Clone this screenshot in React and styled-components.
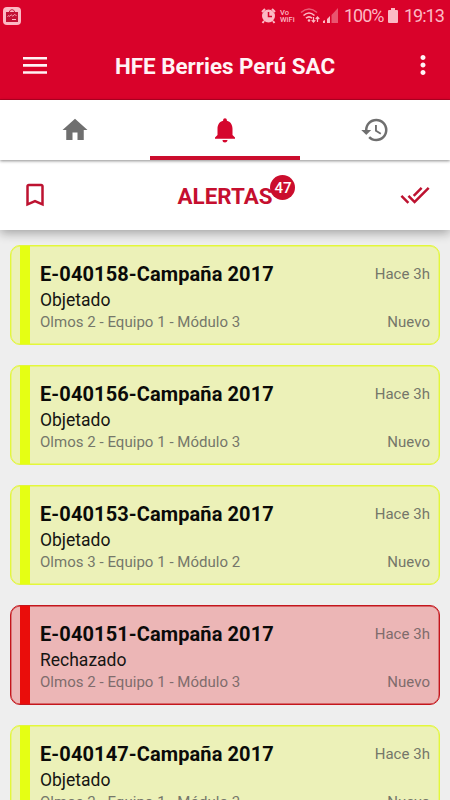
import styled, { createGlobalStyle } from "styled-components";
import {
  MdBookmarkBorder,
  MdDoneAll,
  MdHistory,
  MdHome,
  MdMoreVert,
  MdNotifications,
} from "react-icons/md";

const GlobalStyle = createGlobalStyle`
  * {
    box-sizing: border-box;
  }

  body {
    margin: 0;
    background: #eeeeee;
    font-family: Roboto, "Liberation Sans", sans-serif;
  }
`;

const tones = {
  yellow: { stripe: "#e5ff14", border: "#e3f73a", fill: "#ecf1b8", muted: "#75776a" },
  red: { stripe: "#ea0d0b", border: "#c4161c", fill: "#ecb6b6", muted: "#7f6c6c" },
};

const alerts = [
  { code: "E-040158", status: "Objetado", place: "Olmos 2 - Equipo 1 - Módulo 3", tone: "yellow" },
  { code: "E-040156", status: "Objetado", place: "Olmos 2 - Equipo 1 - Módulo 3", tone: "yellow" },
  { code: "E-040153", status: "Objetado", place: "Olmos 3 - Equipo 1 - Módulo 2", tone: "yellow" },
  { code: "E-040151", status: "Rechazado", place: "Olmos 2 - Equipo 1 - Módulo 3", tone: "red" },
  { code: "E-040147", status: "Objetado", place: "Olmos 2 - Equipo 1 - Módulo 3", tone: "yellow" },
];

const Screen = styled.div`
  display: flex;
  flex-direction: column;
  width: 450px;
  height: 800px;
  overflow: hidden;
`;

const StatusBar = styled.div`
  display: flex;
  flex: none;
  align-items: center;
  justify-content: space-between;
  height: 31px;
  padding: 0 8px 0 3px;
  background: #d9022a;
  color: #fcb9c4;
`;

const StatusIcons = styled.div`
  display: flex;
  align-items: center;
`;

const Vowifi = styled.div`
  width: 16px;
  margin: 0 4px;
  font-size: 7.5px;
  font-weight: 500;
  line-height: 7px;
`;

const StatusText = styled.span`
  width: 38px;
  margin: 1px 6px 0;
  font-size: 18px;
  line-height: 30px;
  letter-spacing: -1px;
  white-space: nowrap;

  &:last-child {
    margin-right: 0;
  }
`;

const Header = styled.header`
  display: flex;
  flex: none;
  align-items: center;
  justify-content: space-between;
  height: 69px;
  padding: 0 12.5px 0 20px;
  background: #d9022a;
  border-bottom: 1px solid #b60022;
  color: #fff3f5;
`;

const IconButton = styled.button`
  display: flex;
  align-items: center;
  justify-content: center;
  width: 30px;
  height: 30px;
  padding: 0;
  border: 0;
  background: none;
  color: inherit;
`;

const Title = styled.h1`
  margin: 1px 7.5px 0 0;
  font-size: 22.4px;
  font-weight: 700;
  line-height: 30px;
  white-space: nowrap;
`;

const Tabs = styled.nav`
  position: relative;
  z-index: 2;
  display: grid;
  flex: none;
  grid-template-columns: repeat(3, 1fr);
  height: 60px;
  background: #fff;
  box-shadow: 0 1px 3px rgba(0, 0, 0, 0.45);
`;

const Tab = styled.button`
  display: flex;
  align-items: center;
  justify-content: center;
  padding: 4px 0 0;
  border: 0;
  border-bottom: 4px solid ${({ $active }) => ($active ? "#cb0d2d" : "transparent")};
  background: none;
  color: ${({ $active }) => ($active ? "#d5062d" : "#6f6f6f")};
`;

const Toolbar = styled.div`
  position: relative;
  z-index: 1;
  display: flex;
  flex: none;
  align-items: center;
  justify-content: space-between;
  height: 70px;
  padding: 0 20px;
  background: #fff;
  box-shadow: 0 3px 10px rgba(0, 0, 0, 0.32);
  color: #bd1230;
`;

const Heading = styled.h2`
  position: relative;
  margin: 2px 0 0;
  font-size: 22.4px;
  font-weight: 700;
  line-height: 30px;
  color: #c50f2f;
`;

const Badge = styled.span`
  position: absolute;
  top: -6px;
  right: -23px;
  width: 25px;
  height: 25px;
  border-radius: 50%;
  background: #cb0d2d;
  color: #fff;
  font-size: 15px;
  font-weight: 500;
  line-height: 26px;
  text-align: center;
`;

const List = styled.main`
  display: flex;
  flex: 1;
  flex-direction: column;
  gap: 20px;
  min-height: 0;
  padding: 15px 10px 0;
  overflow: hidden;
`;

const Card = styled.article`
  display: flex;
  flex: none;
  height: 100px;
  padding: 0 9px;
  border: 1px solid ${({ $tone }) => tones[$tone].border};
  border-radius: 10px;
  background: ${({ $tone }) => tones[$tone].fill};
  box-shadow: inset 0 0 0 0.4px ${({ $tone }) => tones[$tone].border};
  color: ${({ $tone }) => tones[$tone].muted};
`;

const Stripe = styled.div`
  flex: none;
  width: 10px;
  margin-right: 10px;
  background: ${({ $tone }) => tones[$tone].stripe};
`;

const CardBody = styled.div`
  flex: 1;
  padding-top: 15px;
`;

const Row = styled.div`
  display: flex;
  align-items: center;
  justify-content: space-between;
`;

const Name = styled.h3`
  margin: 0;
  color: #0b0b09;
  font-size: 20px;
  font-weight: 700;
  line-height: 26px;
  letter-spacing: 0.1px;
`;

const Status = styled.p`
  margin: 1px 0 0;
  color: #151513;
  font-size: 17.5px;
  line-height: 24px;
`;

const Meta = styled.span`
  font-size: 15px;
  line-height: 20px;
  letter-spacing: 0.03px;
`;

const AppBadge = () => (
  <svg width="18" height="18" viewBox="0 0 18 18" fill="none">
    <rect width="18" height="18" rx="4" fill="#fcb9c4" />
    <path d="M3 5h12v10H3z" fill="#c21135" />
    <path d="M6.5 5c0-3 5-3 5 0" stroke="#c21135" />
    <path d="M4.5 9.5c1-2 2 1 3-1s2 2 3 0 2 0 3 0M9 12.5h4" stroke="#fcb9c4" />
  </svg>
);

const AlarmIcon = () => (
  <svg width="15" height="16" viewBox="0 0 15 16" fill="none">
    <path d="M1 4 4 1M14 4l-3-3M3 13l-1.5 2M12 13l1.5 2" stroke="currentColor" strokeWidth="2" />
    <circle cx="7.5" cy="8" r="6.5" fill="currentColor" />
    <path d="M7.5 4v4.5H11" stroke="#d9022a" strokeWidth="1.5" />
  </svg>
);

const WifiIcon = () => (
  <svg width="20" height="16" viewBox="0 0 20 16" fill="none" stroke="currentColor">
    <path d="M1 4.5q8-7 16 0" strokeWidth="1.6" opacity="0.5" />
    <path d="M3.5 7.5q5.5-5 11 0M6 10.2q3-2.7 6 0" strokeWidth="1.6" />
    <circle cx="9" cy="12.5" r="1.3" fill="currentColor" stroke="none" />
    <path d="M13.5 9v5M11.7 12.2l1.8 2 1.8-2M17.5 14V9M15.7 11l1.8-2 1.8 2" strokeWidth="1.2" />
  </svg>
);

const SignalIcon = styled(({ className }) => (
  <svg className={className} width="15" height="15" viewBox="0 0 15 15" fill="currentColor">
    <path d="M0 15v-2l2-1v3zM4 15v-4l3-3v7z" />
    <path d="M8.5 15V7L15 0v15z" opacity="0.45" />
  </svg>
))`
  margin-left: 3px;
`;

const BatteryIcon = () => (
  <svg width="10" height="15" viewBox="0 0 10 15" fill="currentColor">
    <path d="M3 0h4v2h2q1 0 1 1v11q0 1-1 1H1q-1 0-1-1V3q0-1 1-1h2z" />
  </svg>
);

const MenuIcon = () => (
  <svg width="24" height="17" viewBox="0 0 24 17" fill="currentColor">
    <path d="M0 0h24v2.6H0zM0 7.1h24v2.6H0zM0 14.2h24v2.6H0z" />
  </svg>
);

const AlertCard = ({ code, status, place, tone }) => (
  <Card $tone={tone}>
    <Stripe $tone={tone} />
    <CardBody>
      <Row>
        <Name>{code}-Campaña 2017</Name>
        <Meta>Hace 3h</Meta>
      </Row>
      <Status>{status}</Status>
      <Row>
        <Meta>{place}</Meta>
        <Meta>Nuevo</Meta>
      </Row>
    </CardBody>
  </Card>
);

export default function App() {
  return (
    <Screen>
      <GlobalStyle />
      <StatusBar>
        <AppBadge />
        <StatusIcons>
          <AlarmIcon />
          <Vowifi>
            Vo
            <br />
            WiFi
          </Vowifi>
          <WifiIcon />
          <SignalIcon />
          <StatusText>100%</StatusText>
          <BatteryIcon />
          <StatusText>19:13</StatusText>
        </StatusIcons>
      </StatusBar>
      <Header>
        <IconButton aria-label="Menú">
          <MenuIcon />
        </IconButton>
        <Title>HFE Berries Perú SAC</Title>
        <IconButton aria-label="Más opciones">
          <MdMoreVert size={30} />
        </IconButton>
      </Header>
      <Tabs>
        <Tab aria-label="Inicio">
          <MdHome size={30} />
        </Tab>
        <Tab $active aria-label="Alertas">
          <MdNotifications size={30} />
        </Tab>
        <Tab aria-label="Historial">
          <MdHistory size={30} />
        </Tab>
      </Tabs>
      <Toolbar>
        <IconButton aria-label="Guardados">
          <MdBookmarkBorder size={30} />
        </IconButton>
        <Heading>
          ALERTAS
          <Badge>47</Badge>
        </Heading>
        <IconButton aria-label="Marcar todo">
          <MdDoneAll size={30} />
        </IconButton>
      </Toolbar>
      <List>
        {alerts.map((alert) => (
          <AlertCard key={alert.code} {...alert} />
        ))}
      </List>
    </Screen>
  );
}
